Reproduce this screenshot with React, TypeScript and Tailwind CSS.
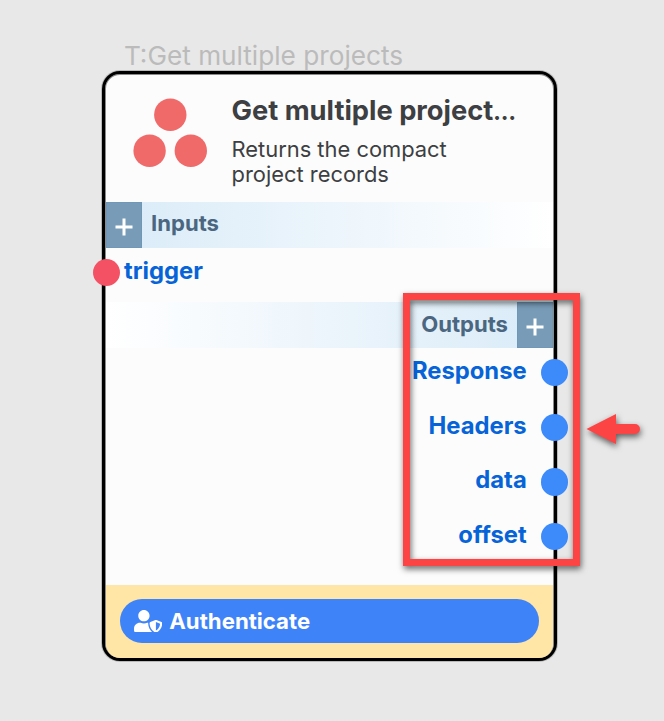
import { FaUserShield } from 'react-icons/fa';

const outputs = ['Response', 'Headers', 'data', 'offset'];

function Plus() {
  return (
    <span className="flex h-[46px] w-[36px] shrink-0 items-center justify-center border border-[#6f97b8] bg-[#789cb8]">
      <svg width="18" height="18" viewBox="0 0 18 18" className="mt-[3px]">
        <path d="M9 0.5V17.5M0.5 9H17.5" stroke="#fff" strokeWidth="3" />
      </svg>
    </span>
  );
}

export default function App() {
  return (
    <div className="relative h-[721px] w-[664px] overflow-hidden bg-[#e8e8e8] font-['Inter',sans-serif]">
      <div className="h-[71px] pl-[124px] pt-[40px] text-[26.2px] leading-[32px] whitespace-nowrap text-[#bbbbbb]">
        T:Get multiple projects
      </div>
      <div className="ml-[102px] h-[590px] w-[455px] rounded-[18px] border-[3px] border-black bg-[#fcfcfc] shadow-[0_0_0_1px_rgba(0,0,0,0.2),inset_0_0_0_1px_rgba(0,0,0,0.45)]">
        <div className="flex h-full flex-col px-px">
          <header className="flex h-[128px] shrink-0">
            <svg width="76" height="72" viewBox="0 0 76 72" className="ml-[26px] mt-[23px] shrink-0" fill="#f06a6a">
              <circle cx="38.3" cy="17.8" r="16.2" />
              <circle cx="17.6" cy="53.7" r="16.2" />
              <circle cx="58.8" cy="53.7" r="16.2" />
            </svg>
            <div className="ml-[23.5px] pt-[20px] text-[#3d3f42]">
              <h1 className="text-[27.3px] leading-[34px] font-bold whitespace-nowrap">
                Get multiple project<span className="text-[21.5px] leading-none font-extrabold">…</span>
              </h1>
              <p className="mt-[9px] text-[21.9px] leading-[25px]">
                Returns the compact
                <br />
                project records
              </p>
            </div>
          </header>
          <section className="flex h-[46px] shrink-0 bg-linear-to-r from-[#d9ebf8] to-white">
            <Plus />
            <h2 className="ml-[9px] text-[22.1px] leading-[43px] font-bold text-[#4a6680]">Inputs</h2>
          </section>
          <div className="-ml-[13px] flex h-[54px] shrink-0">
            <span className="mt-[11px] size-[27px] rounded-full bg-[#f55165]" />
            <span className="ml-[4px] text-[23.8px] leading-[46px] font-bold text-[#0764d8]">trigger</span>
          </div>
          <section className="flex h-[46px] shrink-0 justify-end bg-linear-to-l from-[#d9ebf8] to-white">
            <h2 className="mr-[9px] text-[22.1px] leading-[45px] font-bold text-[#4a6680]">Outputs</h2>
            <Plus />
          </section>
          <div className="-mr-[15px] flex flex-1 flex-col">
            {outputs.map((name) => (
              <div key={name} className="flex h-[54.7px] justify-end">
                <span className="mr-[14px] text-[23.8px] leading-[46px] font-bold text-[#0764d8]">{name}</span>
                <span className="mt-[11px] size-[27.3px] rounded-full bg-[#3d8bfa]" />
              </div>
            ))}
          </div>
          <footer className="h-[73px] shrink-0 rounded-b-[14px] bg-[#ffe6a6] px-[14px] pt-[14px]">
            <button className="flex h-[44px] w-full items-center rounded-full bg-[#3f83f8] pl-[14px] text-white">
              <FaUserShield className="h-[22.6px] w-[28.3px]" />
              <span className="ml-[7px] text-[22.2px] leading-[44px] font-bold">Authenticate</span>
            </button>
          </footer>
        </div>
      </div>
      <div className="absolute left-[403px] top-[293px] h-[273px] w-[177px] border-[7px] border-[#fd4444] drop-shadow-[1px_3px_3px_rgba(0,0,0,0.6)]" />
      <svg className="absolute left-[580px] top-[408px] drop-shadow-[1px_3px_3px_rgba(0,0,0,0.6)]" width="70" height="44" viewBox="0 0 70 44" fill="#fd4444">
        <path d="M6.5 21 36 6V16H55A5 5 0 0 1 55 26H36V36Z" />
      </svg>
    </div>
  );
}
